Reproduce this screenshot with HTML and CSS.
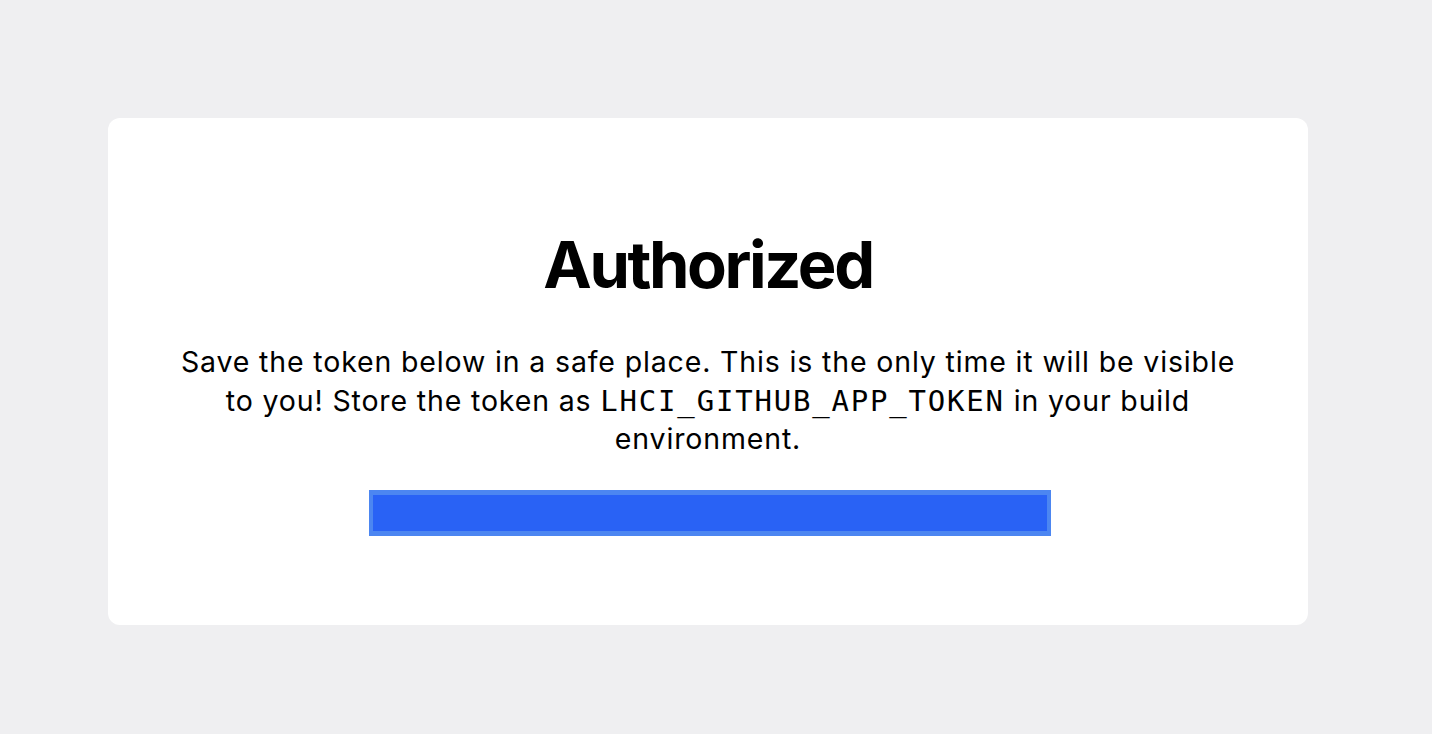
FILE: index.html
```html
<!DOCTYPE html>
<html>
<head>
<meta charset="utf-8">
<link rel="stylesheet" href="styles.css">
</head>
<body>
<main class="card">
  <h1 class="title">Authorized</h1>
  <p class="message">Save the token below in a safe place. This is the only time it will be visible to you! Store the token as <code class="code">LHCI_GITHUB_APP_TOKEN</code> in your build environment.</p>
  <div class="token-row">
    <div class="token-box"></div>
  </div>
</main>
</body>
</html>
```
FILE: styles.css
```css
html, body {
  margin: 0;
  padding: 0;
}
body {
  background: #efeff1;
  font-family: Inter, "Noto Sans", sans-serif;
  color: #000;
  padding: 118px 0 0 108px;
  height: 734px;
  box-sizing: border-box;
}
.card {
  width: 1200px;
  height: 507px;
  box-sizing: border-box;
  background: #fff;
  border-radius: 12px;
  padding: 107px 60px 0;
  display: flex;
  flex-direction: column;
  align-items: center;
}
.title {
  margin: 0;
  font-size: 65px;
  font-weight: 700;
  line-height: 80px;
  letter-spacing: -2.4px;
}
.message {
  margin: 38px 0 0;
  font-size: 28.5px;
  line-height: 38.5px;
  text-align: center;
  letter-spacing: 0.85px;
}
.code {
  font-family: "DejaVu Sans Mono", monospace;
  font-size: 29px;
  letter-spacing: 1.8px;
}
.token-row {
  margin-top: 31px;
  padding-left: 4px;
}
.token-box {
  width: 674px;
  height: 36px;
  background: #2962f5;
  border-style: solid;
  border-color: #4c86f1;
  border-width: 5px 4px;
}
```
